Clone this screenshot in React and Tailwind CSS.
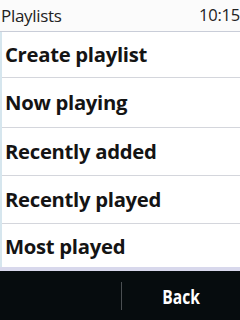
const items = [
  { label: 'Create playlist', h: 'h-[46px]' },
  { label: 'Now playing', h: 'h-[50px]' },
  { label: 'Recently added', h: 'h-[48px]' },
  { label: 'Recently played', h: 'h-[48px]' },
  { label: 'Most played', h: 'flex-1' },
]

const App = () => {
  return (
    <div className="w-[240px] h-[320px] flex flex-col bg-white overflow-hidden" style={{ fontFamily: '"Open Sans", "DejaVu Sans", sans-serif' }}>
      <div className="h-[32px] flex items-center justify-between pl-[1px] pr-0 border-b border-[#c9cdd8] bg-[#fbfbfb]">
        <span className="text-[17px] text-[#222] tracking-[-0.3px]">Playlists</span>
        <span className="text-[16.5px] text-[#222] tracking-[-0.2px]">10:15</span>
      </div>
      <div className="flex-1 flex flex-col border-l-2 border-[#d6e6ee]">
        {items.map((item, i) => (
          <div
            key={item.label}
            className={`${item.h} flex items-center pl-[3px] ${i < items.length - 1 ? 'border-b border-[#d4d6dc]' : 'pt-[2px]'}`}
          >
            <span className="text-[20.3px] font-bold text-[#141414] tracking-[-0.3px]">{item.label}</span>
          </div>
        ))}
      </div>
      <div className="h-[4px] bg-[#d8d8ec]" />
      <div className="h-[49px] flex items-center bg-[#060c0e]">
        <div className="w-[121px] h-full" />
        <div className="w-px h-[28px] bg-[#4a4f52]" />
        <div className="flex-1 flex items-center justify-center pt-[3px]">
          <span className="inline-block text-[20px] font-bold text-white scale-x-[0.78]">Back</span>
        </div>
      </div>
    </div>
  )
}

export default App
